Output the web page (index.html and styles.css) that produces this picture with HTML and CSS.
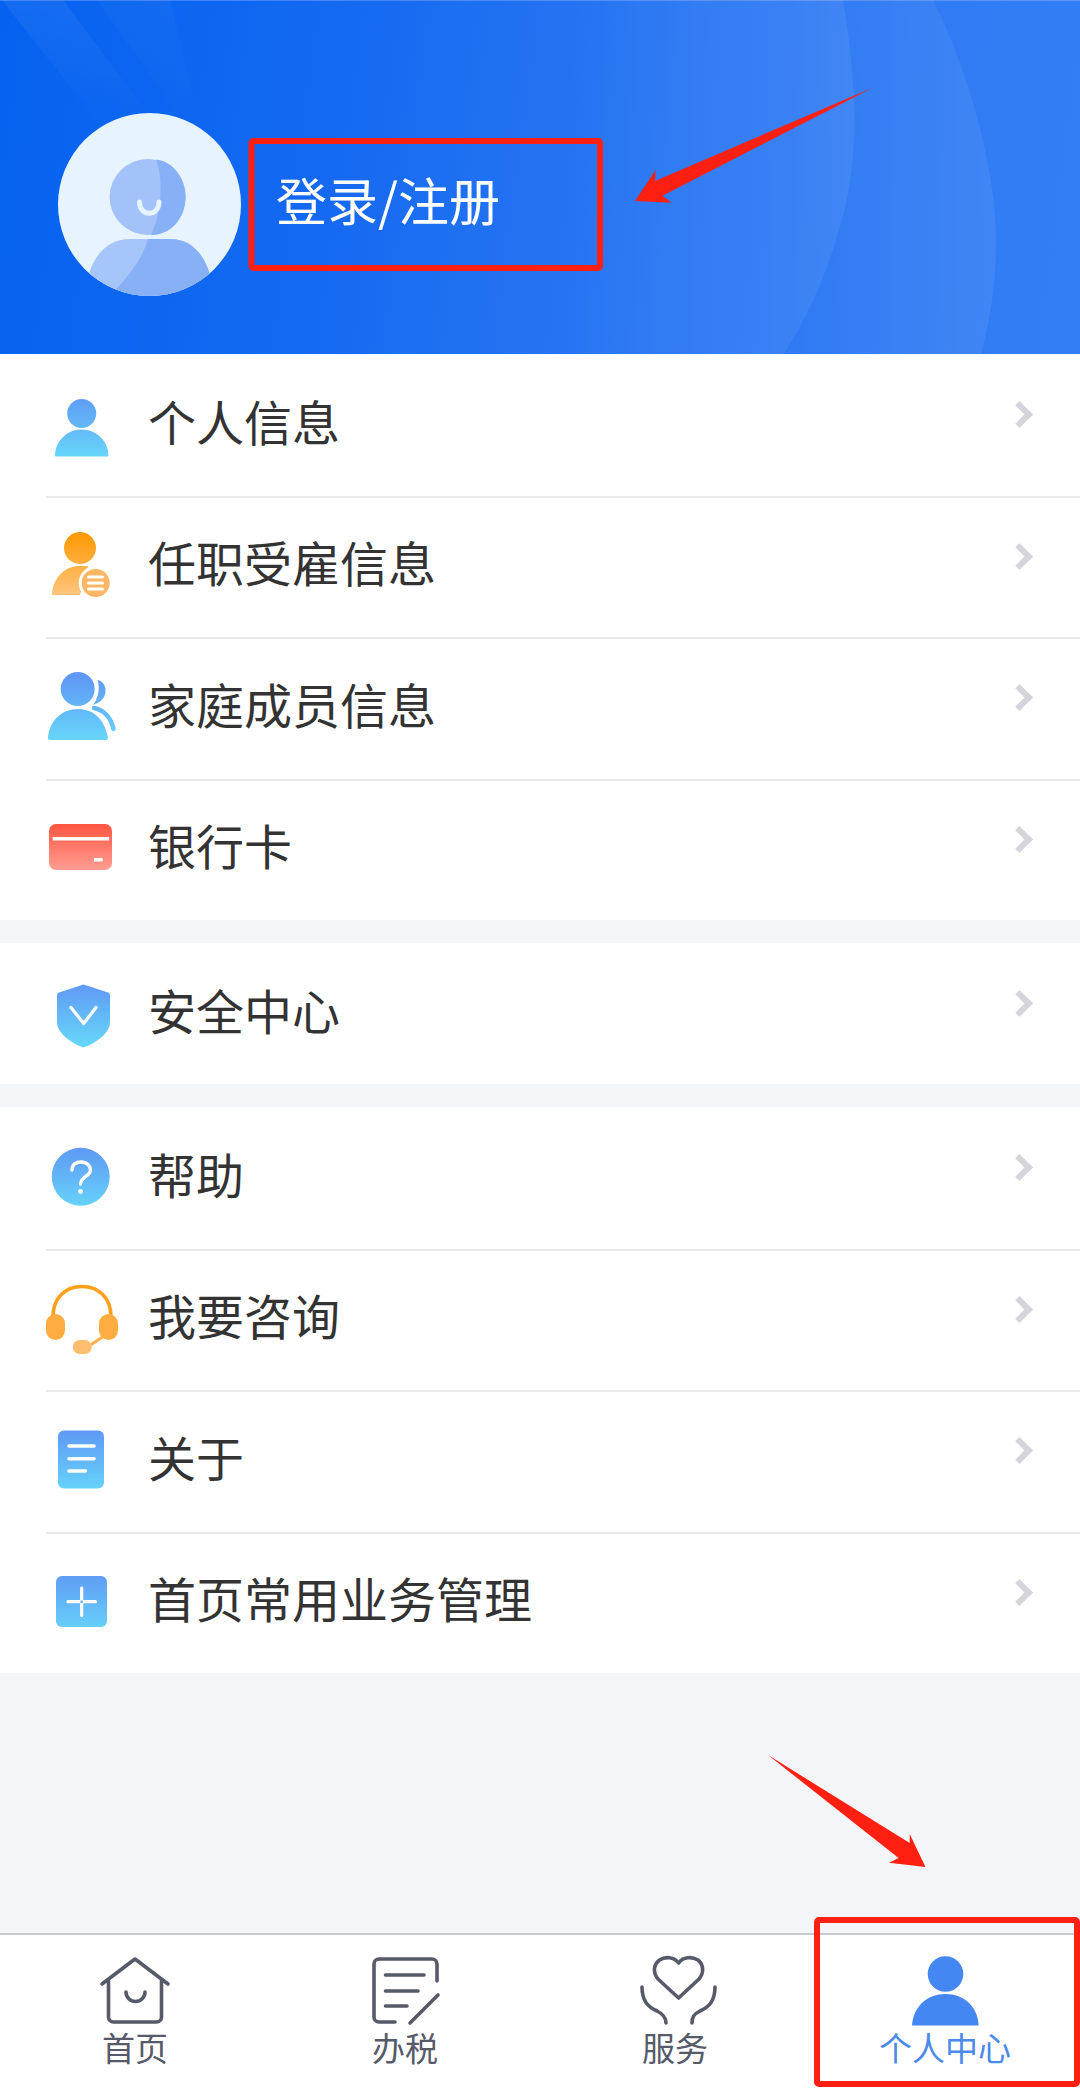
FILE: index.html
```html
<!DOCTYPE html>
<html lang="zh-CN">
<head>
  <meta charset="UTF-8">
  <meta name="viewport" content="width=device-width, initial-scale=1">
  <title>个人中心</title>
  <link rel="stylesheet" href="styles.css">
</head>
<body>
  <!-- shared gradients for the menu icons -->
  <svg class="defs" width="0" height="0" aria-hidden="true">
    <defs>
      <linearGradient id="blueGrad" gradientUnits="userSpaceOnUse" x1="0" y1="10" x2="0" y2="72">
        <stop offset="0" stop-color="#5f99f5"/>
        <stop offset="1" stop-color="#67d6fa"/>
      </linearGradient>
      <linearGradient id="orangeGrad" gradientUnits="userSpaceOnUse" x1="0" y1="6" x2="0" y2="70">
        <stop offset="0" stop-color="#ff9800"/>
        <stop offset="1" stop-color="#ffc680"/>
      </linearGradient>
      <linearGradient id="redGrad" gradientUnits="userSpaceOnUse" x1="0" y1="15" x2="0" y2="61">
        <stop offset="0" stop-color="#ff5640"/>
        <stop offset="1" stop-color="#ff9d93"/>
      </linearGradient>
      <linearGradient id="arcA" gradientUnits="userSpaceOnUse" x1="560" y1="0" x2="856" y2="0">
        <stop offset="0" stop-color="#fff" stop-opacity="0"/>
        <stop offset="1" stop-color="#fff" stop-opacity=".07"/>
      </linearGradient>
      <linearGradient id="arcB" gradientUnits="userSpaceOnUse" x1="780" y1="0" x2="996" y2="0">
        <stop offset="0" stop-color="#fff" stop-opacity="0"/>
        <stop offset="1" stop-color="#fff" stop-opacity=".07"/>
      </linearGradient>
      <linearGradient id="band" gradientUnits="userSpaceOnUse" x1="0" y1="0" x2="0" y2="125">
        <stop offset="0" stop-color="#fff" stop-opacity=".06"/>
        <stop offset="1" stop-color="#fff" stop-opacity="0"/>
      </linearGradient>
      <clipPath id="avatarClip"><circle cx="91.5" cy="91.5" r="91.5"/></clipPath>
    </defs>
  </svg>

  <div class="page">
    <header class="profile">
      <svg class="profile-bg" viewBox="0 0 1080 354" aria-hidden="true">
        <path d="M2 0 H63 L147 113 L150 125 H100 Z" fill="url(#band)"/>
        <path d="M97 0 H170 L200 125 H185 Z" fill="url(#band)" opacity=".5"/>
        <path d="M540 0 H843 C858 90 860 170 837 235 C825 280 805 320 784 354 H540 Z" fill="url(#arcA)"/>
        <path d="M760 0 H933 C975 85 996 180 996 240 C996 285 990 320 981 354 H760 Z" fill="url(#arcB)"/>
      </svg>
      <svg class="avatar" viewBox="0 0 183 183" aria-hidden="true">
        <circle cx="91.5" cy="91.5" r="91.5" fill="#e7f3fe"/>
        <g clip-path="url(#avatarClip)">
          <circle cx="89.6" cy="84" r="38" fill="#a2c2f9"/>
          <path d="M98 46.5 C104 60 106 95 93 122 C115 122 127.600 103 127.600 84 C127.600 64 114 48 98 46.500 Z" fill="#88b0f6"/>
          <path d="M81.500 89 C81.500 104 101 104 101 89" fill="none" stroke="#e7f3fe" stroke-width="5" stroke-linecap="round"/>
          <path d="M30 165 C35 142 50 126 72 126 H112 C134 126 147 142 153 165 L170 190 H20 Z" fill="#a6c6f9"/>
          <path d="M90 126 H112 C134 126 147 142 153 165 L170 190 H45 C65 170 83 150 90 126 Z" fill="#88b0f6"/>
        </g>
      </svg>
      <span class="login">登录/注册</span>
    </header>

    <main class="content">
      <section class="menu-group">
        <div class="menu-row">
          <svg class="menu-icon" viewBox="0 0 80 80" aria-hidden="true">
            <circle cx="39.700" cy="28.500" r="14.500" fill="url(#blueGrad)"/>
            <path d="M13.500 71 C13.500 56 25 45 39.700 45 C54 45 66 56 66 71 Z" fill="url(#blueGrad)" stroke="url(#blueGrad)" stroke-linejoin="round"/>
          </svg>
          <span class="menu-label">个人信息</span>
          <span class="chevron"></span>
        </div>
        <div class="menu-row">
          <svg class="menu-icon" viewBox="0 0 80 80" aria-hidden="true">
            <circle cx="38" cy="22" r="16" fill="url(#orangeGrad)"/>
            <path d="M11 69 Q9 69 10 67 C12 50 24 40 38 40 H46 L38 69 Z" fill="url(#orangeGrad)"/>
            <circle cx="53.700" cy="57" r="17" fill="#fff"/>
            <circle cx="53.700" cy="57" r="14" fill="#ffb766"/>
            <path d="M46.500 51 H60.500 M46.500 57 H60.500 M46.500 63 H60.500" stroke="#fff" stroke-width="3" stroke-linecap="round"/>
          </svg>
          <span class="menu-label">任职受雇信息</span>
          <span class="chevron"></span>
        </div>
        <div class="menu-row">
          <svg class="menu-icon" viewBox="0 0 80 80" aria-hidden="true">
            <path d="M55.500 12 C61 13 64 18 63.500 24 C63 30 58 35 51 37 C56 31 58.500 20 55.500 12 Z" fill="url(#blueGrad)"/>
            <path d="M52 40 C62 42 69 50 71.500 61" fill="none" stroke="url(#blueGrad)" stroke-width="4.500" stroke-linecap="round"/>
            <circle cx="35.700" cy="21" r="17" fill="url(#blueGrad)"/>
            <path d="M6 69 C8 52 20 41 36 41 C52 41 63 52 66 70 Q66 72 64 72 H8 Q5.500 72 6 69 Z" fill="url(#blueGrad)"/>
          </svg>
          <span class="menu-label">家庭成员信息</span>
          <span class="chevron"></span>
        </div>
        <div class="menu-row">
          <svg class="menu-icon" viewBox="0 0 80 80" aria-hidden="true">
            <rect x="7" y="15" width="63" height="46" rx="7" fill="url(#redGrad)"/>
            <rect x="10.700" y="28" width="56.500" height="3.500" fill="#fff"/>
            <rect x="52" y="49" width="8.700" height="3.500" fill="#fff"/>
          </svg>
          <span class="menu-label">银行卡</span>
          <span class="chevron"></span>
        </div>
      </section>

      <section class="menu-group">
        <div class="menu-row menu-row-single">
          <svg class="menu-icon" viewBox="0 0 80 80" aria-hidden="true">
            <path d="M41.500 10.500 L66 18.500 Q68 19.200 68 21 V48 C68 60 52 70 41.500 73.500 C31 70 15 60 15 48 V21 Q15 19.200 17 18.500 Z" fill="url(#blueGrad)"/>
            <path d="M29 33.500 L41.700 49.500 L54 33.500" fill="none" stroke="#fff" stroke-width="3.200" stroke-linecap="round" stroke-linejoin="round"/>
          </svg>
          <span class="menu-label">安全中心</span>
          <span class="chevron"></span>
        </div>
      </section>

      <section class="menu-group">
        <div class="menu-row">
          <svg class="menu-icon" viewBox="0 0 80 80" aria-hidden="true">
            <circle cx="38.700" cy="38.700" r="29" fill="url(#blueGrad)"/>
            <path d="M30 32 C30 26.500 34 24 39 24 C45 24 48.500 28 48.500 32 C48.500 38 39 38.500 38.500 46" fill="none" stroke="#fff" stroke-width="3.400" stroke-linecap="round"/>
            <circle cx="38.500" cy="53.500" r="2.400" fill="#fff"/>
          </svg>
          <span class="menu-label">帮助</span>
          <span class="chevron"></span>
        </div>
        <div class="menu-row">
          <svg class="menu-icon" viewBox="0 0 80 80" aria-hidden="true">
            <path d="M11 38 C11 18 24 7.500 40 7.500 C56 7.500 69 18 69 38" fill="none" stroke="#ff9f1a" stroke-width="3.600"/>
            <rect x="4" y="35" width="19" height="26" rx="9.500" fill="#ffad40"/>
            <rect x="57" y="35" width="19" height="26" rx="9.500" fill="#ffad40"/>
            <path d="M47 67 L62 57" stroke="#ffb04d" stroke-width="3"/>
            <rect x="30.700" y="61" width="19" height="14" rx="7" fill="#ffbd70"/>
          </svg>
          <span class="menu-label">我要咨询</span>
          <span class="chevron"></span>
        </div>
        <div class="menu-row">
          <svg class="menu-icon" viewBox="0 0 80 80" aria-hidden="true">
            <rect x="16" y="9.500" width="46" height="58" rx="6" fill="url(#blueGrad)"/>
            <path d="M27 25 H52 M27 37.700 H52 M27 50 H43.500" stroke="#fff" stroke-width="3.500" stroke-linecap="round"/>
          </svg>
          <span class="menu-label">关于</span>
          <span class="chevron"></span>
        </div>
        <div class="menu-row">
          <svg class="menu-icon" viewBox="0 0 80 80" aria-hidden="true">
            <rect x="14" y="14" width="51" height="51" rx="6" fill="url(#blueGrad)"/>
            <path d="M26 39.700 H53.500 M39.700 26 V53.500" stroke="#fff" stroke-width="3.200" stroke-linecap="round"/>
            <circle cx="39.700" cy="39.700" r="1.500" fill="#7db4f7"/>
          </svg>
          <span class="menu-label">首页常用业务管理</span>
          <span class="chevron"></span>
        </div>
      </section>
    </main>

    <nav class="tabbar">
      <div class="tab">
        <svg class="tab-icon" viewBox="-4 0 88 72" aria-hidden="true">
          <path d="M7 29 L40 4 L73 29 M13.500 25 V62 A5 5 0 0 0 18.500 67 H61.500 A5 5 0 0 0 66.500 62 V25 M31 37 A9.500 9.500 0 0 0 50 37"/>
        </svg>
        <span>首页</span>
      </div>
      <div class="tab">
        <svg class="tab-icon" viewBox="-4 0 88 72" aria-hidden="true">
          <path d="M72 26 V9 A5 5 0 0 0 67 4 H14 A5 5 0 0 0 9 9 V62 A5 5 0 0 0 14 67 H30 M20.500 20 H59 M20.500 36 H53 M20.500 51 H42 M45 68 L73 40"/>
        </svg>
        <span>办税</span>
      </div>
      <div class="tab">
        <svg class="tab-icon" viewBox="-4 0 88 72" aria-hidden="true">
          <path d="M43.600 8 C39 1.500 30 1.500 24.500 5 C18 10 18 18 23 24 L43.600 43 L64 24 C69 18 69 10 63 5 C57 1.500 48 1.500 43.600 8 Z M7 32 C7 46 13 52 22 56 C28 59 31 62 31 68 M80 32 C80 46 74 52 65 56 C59 59 57 62 57 68"/>
        </svg>
        <span>服务</span>
      </div>
      <div class="tab tab-active">
        <svg class="tab-icon" viewBox="-4 0 88 72" aria-hidden="true">
          <circle cx="40.500" cy="19" r="17.800"/>
          <path d="M7 70.600 C8 52 22 39 40.500 39 C59 39 73 52 73.600 70.600 Z"/>
        </svg>
        <span>个人中心</span>
      </div>
    </nav>

    <!-- red markup drawn on top of the screenshot -->
    <svg class="markup" viewBox="0 0 1080 2088" aria-hidden="true">
      <rect class="markup-box" x="251.500" y="141" width="348.500" height="127" rx="2"/>
      <rect class="markup-box" x="817" y="1920" width="260" height="164" rx="2"/>
      <polygon class="markup-arrow" points="872.600,87.700 655,181 655.600,170 635,201 671.500,202.700 662.500,195.700"/>
      <polygon class="markup-arrow" points="768,1755 909.700,1843 909.700,1834 925.500,1867 889,1862.700 898.600,1858"/>
    </svg>
  </div>
</body>
</html>
```

FILE: styles.css
```css
/* Base */
body {
  margin: 0;
  font-family: "Noto Sans CJK SC", "Noto Sans", sans-serif;
  background-color: #f4f5f9;
  color: #333;
}
.defs {
  position: absolute;
}
.page {
  position: relative;
  display: flex;
  flex-direction: column;
  width: 1080px;
  height: 2088px;
  overflow: hidden;
}
/* Blue profile header */
.profile {
  position: relative;
  display: flex;
  align-items: center;
  box-sizing: border-box;
  height: 354px;
  padding: 55px 0 0 58px;
  background: linear-gradient(98deg, #0562f0 0%, #1469f1 30%, #2c78f3 62%, #347ef4 100%);
  box-shadow: inset 0 1px 0 rgba(255,255,255,0.2);
}
.profile-bg {
  position: absolute;
  top: 0;
  left: 0;
  width: 1080px;
  height: 354px;
}
.avatar {
  position: relative;
  width: 183px;
  height: 183px;
  flex: none;
}
.login {
  position: relative;
  margin: 0 0 12px 35px;
  font-size: 51px;
  line-height: 60px;
  color: #fff;
  white-space: nowrap;
}
/* Menu list */
.content {
  flex: 1;
}
.menu-group {
  background-color: #fff;
  margin-bottom: 23px;
}
.menu-row {
  position: relative;
  display: flex;
  align-items: center;
  height: 141.5px;
  padding: 0 48px 0 42px;
}
.menu-row-single {
  height: 141px;
}
.menu-row::after {
  content: "";
  position: absolute;
  left: 46px;
  right: 0;
  bottom: -2px;
  height: 2px;
  background-color: #e9e9eb;
}
.menu-row:last-child::after {
  display: none;
}
.menu-icon {
  width: 80px;
  height: 80px;
  flex: none;
  margin-right: 26px;
}
.menu-label {
  flex: 1;
  margin-bottom: 10px;
  font-size: 48px;
  line-height: 60px;
  color: #333;
  white-space: nowrap;
}
.chevron {
  width: 13px;
  height: 13px;
  flex: none;
  margin: 0 3px 20px 0;
  border-top: 6px solid #d4d4dc;
  border-right: 6px solid #d4d4dc;
  transform: rotate(45deg);
}
/* Bottom tabs */
.tabbar {
  display: grid;
  grid-template-columns: repeat(4, 270px);
  box-sizing: border-box;
  height: 155px;
  padding-top: 20px;
  background-color: #fff;
  border-top: 2px solid #c9c9ce;
}
.tab {
  display: flex;
  flex-direction: column;
  align-items: center;
  font-size: 33px;
  line-height: 40px;
  color: #565a69;
}
.tab-icon {
  width: 88px;
  height: 72px;
  fill: none;
  stroke: #565a69;
  stroke-width: 3.6;
  stroke-linecap: round;
  stroke-linejoin: round;
}
.tab-active {
  color: #4a8ae8;
}
.tab-active .tab-icon {
  fill: #4486f2;
  stroke: none;
}
/* Red annotations */
.markup {
  position: absolute;
  top: 0;
  left: 0;
  width: 1080px;
  height: 2088px;
  pointer-events: none;
}
.markup-box {
  fill: none;
  stroke: #ff2012;
  stroke-width: 6;
}
.markup-arrow {
  fill: #ff2012;
}
```
